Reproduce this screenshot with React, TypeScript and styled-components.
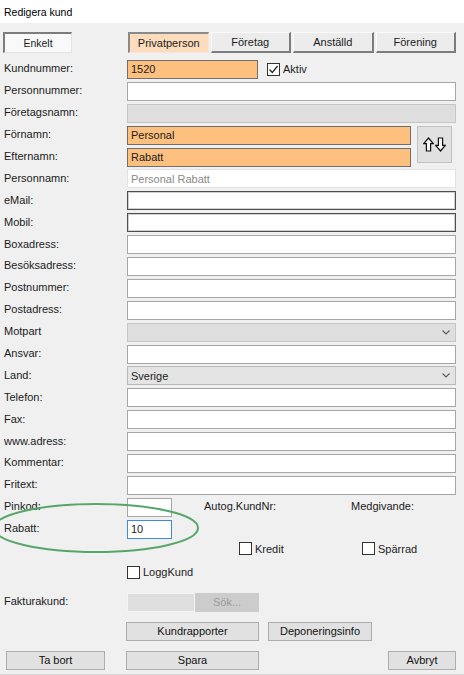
import React from "react"
import styled, { createGlobalStyle, css } from "styled-components"

const GlobalStyle = createGlobalStyle`
  html, body {
    margin: 0;
    padding: 0;
    background: #f0f0f0;
  }
  body {
    font-family: "Liberation Sans", Arial, sans-serif;
    font-size: 11px;
    color: #1b1b1b;
  }
`

const ROW = 21.9

const Window = styled.div`
  position: relative;
  width: 464px;
  height: 675px;
  overflow: hidden;
  background: #f0f0f0;
  box-sizing: border-box;
  border-bottom: 1px solid #d6d6d6;
`

const TitleBar = styled.div`
  height: 23px;
  display: flex;
  align-items: center;
  padding-left: 4px;
  background: #fff;
  font-size: 10.5px;
  color: #000;
`

const Body = styled.div`
  padding: 9px 8px 0 3px;
`

const TopRow = styled.div`
  display: flex;
  height: 21px;
`

const ModeButton = styled.div`
  width: 69px;
  box-sizing: border-box;
  display: flex;
  align-items: center;
  justify-content: center;
  background: #f9f9f9;
  border-top: 2px solid #7d7d7d;
  border-left: 2px solid #7d7d7d;
  border-right: 1px solid #e4e4e4;
  border-bottom: 1px solid #e4e4e4;
  font-size: 10.5px;
`

const Tabs = styled.div`
  flex: 1;
  margin-left: 56px;
  display: grid;
  grid-template-columns: repeat(4, 1fr);
  gap: 2px;
`

const Tab = styled.div<{ $active?: boolean }>`
  box-sizing: border-box;
  display: flex;
  align-items: center;
  justify-content: center;
  ${(p) =>
    p.$active
      ? css`
          background: #fddcbd;
          border-top: 2px solid #8a8a8a;
          border-left: 2px solid #8a8a8a;
          border-right: 1px solid #f6e6d6;
          border-bottom: 1px solid #f6e6d6;
        `
      : css`
          background: #ececec;
          border-top: 1px solid #fafafa;
          border-left: 1px solid #fafafa;
          border-right: 2px solid #7d7d7d;
          border-bottom: 2px solid #7d7d7d;
        `}
`

const Form = styled.div`
  margin-top: 5.5px;
`

const FieldRow = styled.div`
  display: grid;
  grid-template-columns: 124px 1fr;
  align-items: center;
  height: ${ROW}px;
`

const Label = styled.span`
  padding-left: 1px;
  margin-top: -2px;
  white-space: nowrap;
`

type Tone = "plain" | "dark" | "orange" | "disabled" | "soft" | "focus" | "combo"

const tones: Record<Tone, ReturnType<typeof css>> = {
  plain: css`
    background: #fff;
    border: 1px solid #a6a6a6;
  `,
  dark: css`
    background: #fff;
    border: 1px solid #4e4e4e;
    box-shadow: inset 0 0 0 1px #d0d0d0;
  `,
  orange: css`
    background: #fec07f;
    border: 1px solid #6f6f6f;
  `,
  disabled: css`
    background: #dedede;
    border: 1px solid #c6c6c6;
  `,
  soft: css`
    background: #fff;
    border: 1px solid #e2e2e2;
    color: #8a8a8a;
  `,
  focus: css`
    background: #fff;
    border: 1px solid #3d8be0;
  `,
  combo: css`
    background: #e4e4e4;
    border: 1px solid #b9b9b9;
  `,
}

const Field = styled.div<{ $tone?: Tone; $w?: number }>`
  box-sizing: border-box;
  height: 19px;
  width: ${(p) => (p.$w ? `${p.$w}px` : "100%")};
  display: flex;
  align-items: center;
  justify-content: space-between;
  padding: 0 5px 0 3px;
  ${(p) => tones[p.$tone ?? "plain"]}
`

const Chevron = () => (
  <svg width="8" height="5" viewBox="0 0 8 5">
    <path d="M0.5 0.5 L4 4 L7.5 0.5" fill="none" stroke="#5a5a5a" strokeWidth="1.1" />
  </svg>
)

const CheckWrap = styled.label`
  display: inline-flex;
  align-items: center;
  gap: 3px;
  white-space: nowrap;
`

const CheckBox = styled.span`
  width: 13px;
  height: 13px;
  box-sizing: border-box;
  border: 1px solid #333;
  background: #fff;
  display: inline-flex;
  align-items: center;
  justify-content: center;
`

const Check = ({ label, checked }: { label: string; checked?: boolean }) => (
  <CheckWrap>
    <CheckBox>
      {checked && (
        <svg width="11" height="11" viewBox="0 0 11 11">
          <path d="M1.5 5.5 L4.3 8.5 L9.6 2" fill="none" stroke="#222" strokeWidth="1.2" />
        </svg>
      )}
    </CheckBox>
    {label}
  </CheckWrap>
)

const Inline = styled.div`
  display: flex;
  align-items: center;
  gap: 9px;
`

const NameGroup = styled.div`
  display: flex;
  align-items: flex-start;
`

const NameFields = styled.div`
  flex: 1;
`

const SwapButton = styled.button`
  width: 35px;
  height: 37px;
  margin: 2px 4px 0 6px;
  padding: 0;
  box-sizing: border-box;
  background: #e1e1e1;
  border: 1px solid #c2c2c2;
  display: flex;
  align-items: center;
  justify-content: center;
  gap: 1px;
`

const ArrowUp = ({ flip }: { flip?: boolean }) => (
  <svg width="11" height="15" viewBox="0 0 11 15" style={flip ? { transform: "scaleY(-1)" } : undefined}>
    <path
      d="M5.5 1 L10.3 6.6 L7.6 6.6 L7.6 14 L3.4 14 L3.4 6.6 L0.7 6.6 Z"
      fill="#f4f7fc"
      stroke="#111"
      strokeWidth="1.2"
      strokeLinejoin="miter"
    />
  </svg>
)

const PinCell = styled.div`
  display: flex;
  align-items: center;
`

const SideNote = styled.span<{ $w?: number; $ml?: number }>`
  width: ${(p) => (p.$w ? `${p.$w}px` : "auto")};
  margin-left: ${(p) => p.$ml ?? 0}px;
  white-space: nowrap;
  margin-top: -2px;
`

const ChecksRow = styled.div`
  display: grid;
  grid-template-columns: 236px 123px auto;
  align-items: center;
  height: 17px;
`

const LoggRow = styled.div`
  display: flex;
  align-items: center;
  height: 30px;
  padding-left: 124px;
`

const InvoiceRow = styled.div`
  display: grid;
  grid-template-columns: 124px 68px 64px;
  align-items: center;
  height: 19px;
  margin-top: 5.7px;
`

const SearchButton = styled.div`
  height: 19px;
  box-sizing: border-box;
  background: #cccccc;
  color: #9a9a9a;
  display: flex;
  align-items: center;
  justify-content: center;
`

const ActionRow = styled.div`
  display: flex;
  gap: 9px;
  margin-top: 10px;
  padding-left: 123px;
`

const BottomRow = styled.div`
  display: flex;
  margin-top: 10px;
  padding-left: 3px;
`

const Button = styled.button<{ $w: number; $ml?: number }>`
  width: ${(p) => p.$w}px;
  height: 19px;
  margin-left: ${(p) => p.$ml ?? 0}px;
  padding: 0;
  box-sizing: border-box;
  background: #e1e1e1;
  border: 1px solid #adadad;
  font-family: inherit;
  font-size: 11px;
  color: #111;
`

const Annotation = styled.svg`
  position: absolute;
  left: -8px;
  top: 502px;
  pointer-events: none;
`

type Row = { label: string; tone?: Tone; value?: string; combo?: boolean }

const addressRows: Row[] = [
  { label: "Personnamn:", tone: "soft", value: "Personal Rabatt" },
  { label: "eMail:", tone: "dark" },
  { label: "Mobil:", tone: "dark" },
  { label: "Boxadress:" },
  { label: "Besöksadress:" },
  { label: "Postnummer:" },
  { label: "Postadress:" },
  { label: "Motpart", tone: "disabled", combo: true },
  { label: "Ansvar:" },
  { label: "Land:", tone: "combo", value: "Sverige", combo: true },
  { label: "Telefon:" },
  { label: "Fax:" },
  { label: "www.adress:" },
  { label: "Kommentar:" },
  { label: "Fritext:" },
]

const tabs = ["Privatperson", "Företag", "Anställd", "Förening"]

export default function App() {
  return (
    <Window>
      <GlobalStyle />
      <TitleBar>Redigera kund</TitleBar>
      <Body>
        <TopRow>
          <ModeButton>Enkelt</ModeButton>
          <Tabs>
            {tabs.map((t, i) => (
              <Tab key={t} $active={i === 0}>
                {t}
              </Tab>
            ))}
          </Tabs>
        </TopRow>

        <Form>
          <FieldRow>
            <Label>Kundnummer:</Label>
            <Inline>
              <Field $tone="orange" $w={131}>1520</Field>
              <Check label="Aktiv" checked />
            </Inline>
          </FieldRow>
          <FieldRow>
            <Label>Personnummer:</Label>
            <Field />
          </FieldRow>
          <FieldRow>
            <Label>Företagsnamn:</Label>
            <Field $tone="disabled" />
          </FieldRow>

          <NameGroup>
            <NameFields>
              <FieldRow>
                <Label>Förnamn:</Label>
                <Field $tone="orange">Personal</Field>
              </FieldRow>
              <FieldRow>
                <Label>Efternamn:</Label>
                <Field $tone="orange">Rabatt</Field>
              </FieldRow>
            </NameFields>
            <SwapButton>
              <ArrowUp />
              <ArrowUp flip />
            </SwapButton>
          </NameGroup>

          {addressRows.map((r) => (
            <FieldRow key={r.label}>
              <Label>{r.label}</Label>
              <Field $tone={r.tone}>
                <span>{r.value}</span>
                {r.combo && <Chevron />}
              </Field>
            </FieldRow>
          ))}

          <FieldRow>
            <Label>Pinkod:</Label>
            <PinCell>
              <Field $w={45} />
              <SideNote $ml={32} $w={147}>Autog.KundNr:</SideNote>
              <SideNote>Medgivande:</SideNote>
            </PinCell>
          </FieldRow>
          <FieldRow>
            <Label>Rabatt:</Label>
            <Field $tone="focus" $w={45}>10</Field>
          </FieldRow>
        </Form>

        <ChecksRow>
          <span />
          <Check label="Kredit" />
          <Check label="Spärrad" />
        </ChecksRow>
        <LoggRow>
          <Check label="LoggKund" />
        </LoggRow>

        <InvoiceRow>
          <Label>Fakturakund:</Label>
          <Field $tone="disabled" style={{ borderColor: "#f4f4f4" }} />
          <SearchButton>Sök...</SearchButton>
        </InvoiceRow>

        <ActionRow>
          <Button $w={133}>Kundrapporter</Button>
          <Button $w={104}>Deponeringsinfo</Button>
        </ActionRow>

        <BottomRow>
          <Button $w={99}>Ta bort</Button>
          <Button $w={133} $ml={21}>Spara</Button>
          <Button $w={68} $ml={129}>Avbryt</Button>
        </BottomRow>
      </Body>

      <Annotation width="210" height="54" viewBox="0 0 210 54">
        <ellipse cx="104" cy="26" rx="102" ry="24" fill="none" stroke="#56a66c" strokeWidth="2" />
      </Annotation>
    </Window>
  )
}
